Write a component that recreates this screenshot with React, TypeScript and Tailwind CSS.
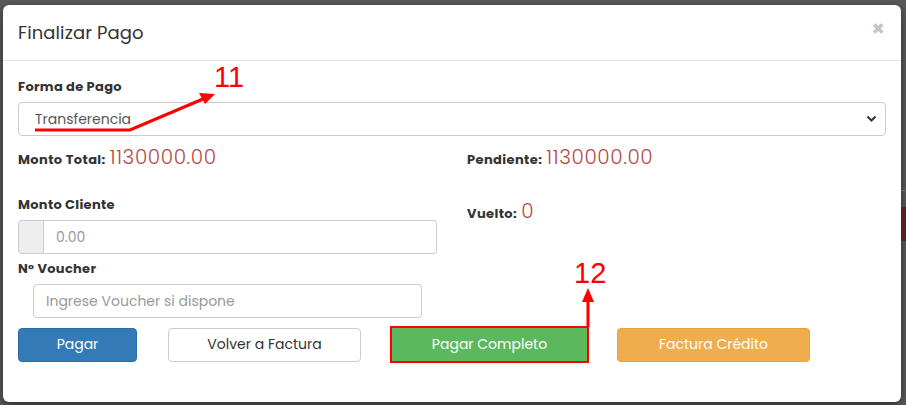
import React from 'react';

const font = { fontFamily: '"Poppins", "Open Sans", "DejaVu Sans", sans-serif' };

export default function App() {
  return (
    <div className="relative flex w-[906px] h-[405px] bg-[#595959] overflow-hidden" style={font}>
      {/* Modal */}
      <div className="ml-[3px] mt-[5px] w-[898px] h-[397px] bg-white rounded-[6px] shadow-[0_3px_9px_rgba(0,0,0,0.5)] flex flex-col">
        {/* Header */}
        <div className="h-[56px] border-b border-[#e5e5e5] flex items-center justify-between px-[15px]">
          <h4 className="text-[18px] text-[#333] leading-none tracking-[0.1px]">Finalizar Pago</h4>
          <span className="text-[21px] font-bold text-[#c4c4c4] leading-none mr-[1px] -mt-[8px]">×</span>
        </div>

        {/* Body */}
        <div className="px-[15px] pt-[16px]">
          <label className="block text-[13px] font-bold text-[#333] leading-[20px] mb-[5px] tracking-[0.3px]">Forma de Pago</label>
          <div className="h-[34px] border border-[#ccc] rounded-[4px] flex items-center justify-between pl-[16px] pr-[8px]">
            <span className="text-[14px] text-[#555]">Transferencia</span>
            <svg width="11" height="8" viewBox="0 0 11 8">
              <path d="M1.5 1.5 L5.5 5.5 L9.5 1.5" fill="none" stroke="#333" strokeWidth="2" />
            </svg>
          </div>

          <div className="grid grid-cols-2 gap-x-[30px] mt-[6px]">
            <div>
              <div className="flex items-baseline h-[26px]">
                <span className="text-[13px] font-bold text-[#333] tracking-[0.4px]">Monto Total:</span>
                <span className="ml-[4px] text-[20px] font-light text-[#b94a48] tracking-[0.6px]">1130000.00</span>
              </div>
              <label className="block mt-[27px] text-[13px] font-bold text-[#333] leading-[20px] mb-[5px] tracking-[0.3px]">Monto Cliente</label>
              <div className="flex h-[34px] w-[419px]">
                <div className="w-[26px] bg-[#eee] border border-[#ccc] rounded-l-[4px]" />
                <div className="flex-1 border border-l-0 border-[#ccc] rounded-r-[4px] flex items-center pl-[12px]">
                  <span className="text-[14px] text-[#999]">0.00</span>
                </div>
              </div>
              <label className="block mt-[5px] text-[13px] font-bold text-[#333] leading-[20px] mb-[5px] tracking-[0.3px]">N° Voucher</label>
              <div className="ml-[15px] w-[389px] h-[34px] border border-[#ccc] rounded-[4px] flex items-center pl-[12px]">
                <span className="text-[14px] text-[#999]">Ingrese Voucher si dispone</span>
              </div>
            </div>
            <div>
              <div className="flex items-baseline h-[26px]">
                <span className="text-[13px] font-bold text-[#333] tracking-[0.4px]">Pendiente:</span>
                <span className="ml-[4px] text-[20px] font-light text-[#b94a48] tracking-[0.6px]">1130000.00</span>
              </div>
              <div className="flex items-baseline mt-[28px]">
                <span className="text-[13px] font-bold text-[#333] tracking-[0.4px]">Vuelto:</span>
                <span className="ml-[4px] text-[20px] font-light text-[#b94a48]">0</span>
              </div>
            </div>
          </div>

          {/* Buttons */}
          <div className="flex items-center mt-[8px]">
            <button className="w-[119px] h-[34px] bg-[#337ab7] border border-[#2e6da4] rounded-[4px] text-white text-[14px]">Pagar</button>
            <button className="ml-[31px] w-[193px] h-[34px] bg-white border border-[#ccc] rounded-[4px] text-[#333] text-[14px]">Volver a Factura</button>
            <button className="ml-[29px] w-[199px] h-[37px] bg-[#5cb85c] border-2 border-[#ff0000] text-white text-[14px]">Pagar Completo</button>
            <button className="ml-[28px] w-[193px] h-[34px] bg-[#f0ad4e] border border-[#eea236] rounded-[4px] text-white text-[14px]">Factura Crédito</button>
          </div>
        </div>
      </div>

      {/* Background page peeking at the right */}
      <div className="flex-1 flex flex-col pt-[190px]">
        <div className="h-[1px] bg-[#6a6a6a]" />
        <div className="h-[16px]" />
        <div className="h-[34px] bg-[#5a2020]" />
      </div>

      {/* Annotations */}
      <svg className="absolute left-0 top-0 pointer-events-none" width="906" height="405">
        <polyline points="35,130 130,130 203,99" fill="none" stroke="#ff0000" strokeWidth="3" />
        <polygon points="215,94 199,93 205,104" fill="#ff0000" />
        <line x1="588" y1="327" x2="588" y2="300" stroke="#ff0000" strokeWidth="3" />
        <polygon points="588,288 582,302 594,302" fill="#ff0000" />
      </svg>
      <div className="absolute left-[214px] top-[63px] text-[29px] leading-none text-[#ff0000]" style={{ fontFamily: '"Liberation Sans", Arial, sans-serif' }}>11</div>
      <div className="absolute left-[574px] top-[259px] text-[29px] leading-none text-[#ff0000]" style={{ fontFamily: '"Liberation Sans", Arial, sans-serif' }}>12</div>
    </div>
  );
}
